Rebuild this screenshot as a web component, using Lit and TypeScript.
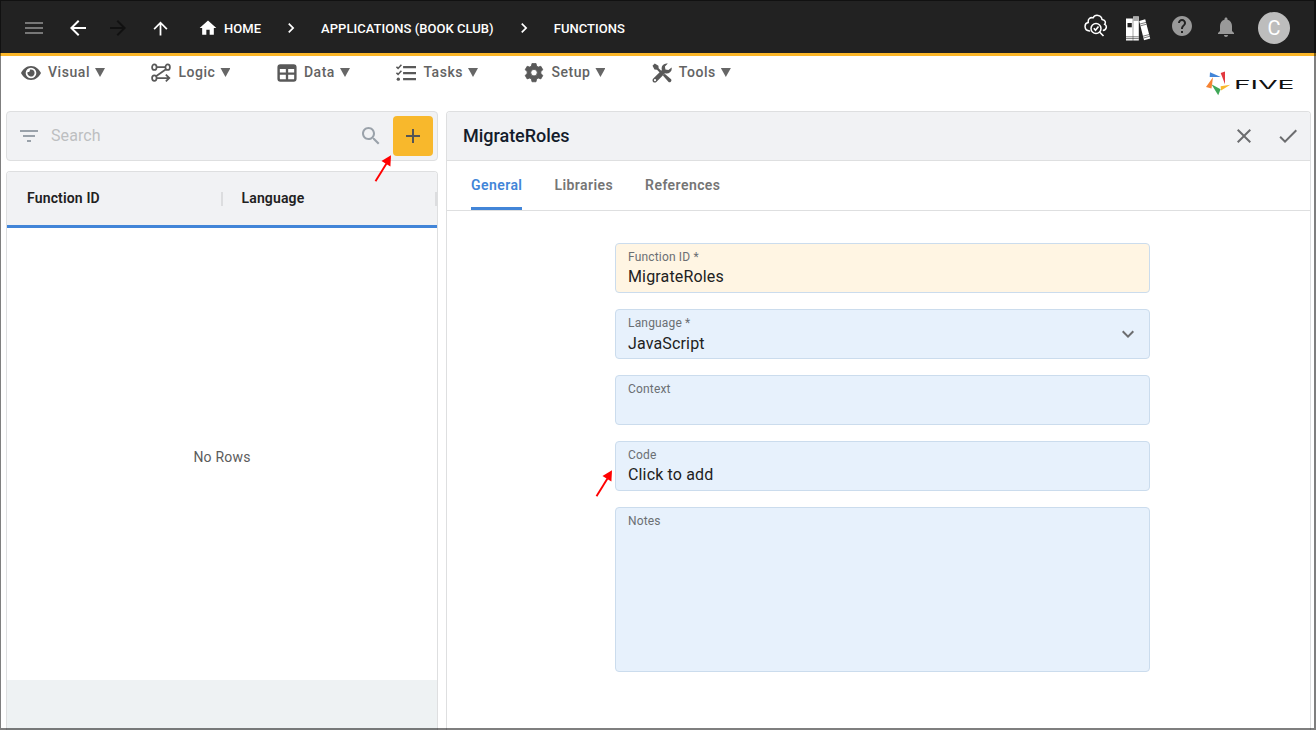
import { LitElement, html, svg, css } from "lit";
import { customElement } from "lit/decorators.js";

const icon = (size: number, body: unknown, cls = "") =>
  html`<svg class="ic ${cls}" width=${size} height=${size} viewBox="0 0 24 24" fill="currentColor">${body}</svg>`;

const P = (d: string) => svg`<path d=${d}></path>`;

const I = {
  menu: P("M3 18h18v-2H3v2zm0-5h18v-2H3v2zm0-7v2h18V6H3z"),
  back: P("M20 11H7.83l5.59-5.59L12 4l-8 8 8 8 1.41-1.41L7.83 13H20v-2z"),
  forward: P("M12 4l-1.41 1.41L16.17 11H4v2h12.17l-5.58 5.59L12 20l8-8z"),
  up: P("M4 12l1.41 1.41L11 7.83V20h2V7.83l5.58 5.59L20 12l-8-8-8 8z"),
  home: P("M10 20v-6h4v6h5v-8h3L12 3 2 12h3v8z"),
  chevron: P("M10 6 8.59 7.41 13.17 12l-4.58 4.59L10 18l6-6z"),
  help: P("M12 2C6.48 2 2 6.48 2 12s4.48 10 10 10 10-4.48 10-10S17.52 2 12 2zm1 17h-2v-2h2v2zm2.07-7.75-.9.92C13.45 12.9 13 13.5 13 15h-2v-.5c0-1.1.45-2.1 1.17-2.83l1.24-1.26c.37-.36.59-.86.59-1.41 0-1.1-.9-2-2-2s-2 .9-2 2H8c0-2.21 1.79-4 4-4s4 1.79 4 4c0 .88-.36 1.68-.93 2.25z"),
  bell: P("M12 22c1.1 0 2-.9 2-2h-4c0 1.1.89 2 2 2zm6-6v-5c0-3.07-1.64-5.64-4.5-6.32V4c0-.83-.67-1.5-1.5-1.5s-1.5.67-1.5 1.5v.68C7.63 5.36 6 7.92 6 11v5l-2 2v1h16v-1l-2-2z"),
  filter: P("M10 18h4v-2h-4v2zM3 6v2h18V6H3zm3 7h12v-2H6v2z"),
  search: P("M15.5 14h-.79l-.28-.27C15.41 12.59 16 11.11 16 9.5 16 5.91 13.09 3 9.5 3S3 5.91 3 9.5 5.91 16 9.5 16c1.61 0 3.09-.59 4.23-1.57l.27.28v.79l5 4.99L20.49 19l-4.99-5zm-6 0C7.01 14 5 11.99 5 9.5S7.01 5 9.5 5 14 7.01 14 9.5 11.99 14 9.5 14z"),
  add: P("M19 13h-6v6h-2v-6H5v-2h6V5h2v6h6v2z"),
  close: P("M19 6.41 17.59 5 12 10.59 6.41 5 5 6.41 10.59 12 5 17.59 6.41 19 12 13.41 17.59 19 19 17.59 13.41 12z"),
  check: P("M9 16.17 4.83 12l-1.42 1.41L9 19 21 7l-1.41-1.41z"),
  expand: P("M16.59 8.59 12 13.17 7.41 8.59 6 10l6 6 6-6z"),
  eye: svg`<path fill-rule="evenodd" d="M12 3.6C6.3 3.6 2 7.8 0 12c2 4.200 6.300 8.400 12 8.400s10-4.200 12-8.400C22 7.800 17.700 3.600 12 3.600zM12 18.400a6.400 6.400 0 1 1 0-12.800 6.400 6.400 0 0 1 0 12.800z"></path><path d="M12 7.700a4.300 4.300 0 1 1-4.100 3c1.600.6 3.200-.8 2.700-2.700.4-.2.900-.3 1.400-.3z"></path>`,
  logic: svg`<g fill="none" stroke="currentColor" stroke-width="2.100"><ellipse cx="4" cy="5" rx="2.700" ry="3.300"></ellipse><ellipse cx="20" cy="5" rx="2.700" ry="3.300"></ellipse><ellipse cx="4" cy="18" rx="2.700" ry="3.300"></ellipse><path d="M7 5h10M18 7.500 6 15.800M7 18h14M17.800 14l4.200 4-4.200 4"></path></g>`,
  data: svg`<path fill-rule="evenodd" d="M4 1.500h16a3.500 3.500 0 0 1 3.500 3.500v14a3.500 3.500 0 0 1-3.500 3.500H4A3.500 3.500 0 0 1 .5 19V5A3.500 3.500 0 0 1 4 1.500zM3.400 7.300v4h7.200v-4zM13.400 7.300v4h7.200v-4zM3.400 14v4.500a1 1 0 0 0 1 1h6.200V14zM13.400 14v5.500h6.200a1 1 0 0 0 1-1V14z"></path>`,
  tasks: svg`<path d="M8.500 3.500H24v2.800H8.500zM8.500 10.700H24v2.800H8.500zM8.500 18H24v2.800H8.500z"></path><circle cx="2.800" cy="19.400" r="2"></circle><path fill="none" stroke="currentColor" stroke-width="1.900" d="M.5 4.600 2.500 6.500 6.500 2.200M.5 11.800l2 1.900 4-4.300"></path>`,
  gear: svg`<path fill-rule="evenodd" d="M9.600.5h4.800l.7 3.200 2 1.200 3.100-1 2.400 4.200-2.400 2.200v2.400l2.400 2.200-2.400 4.200-3.100-1-2 1.200-.7 3.200H9.600l-.7-3.200-2-1.200-3.100 1-2.400-4.200 2.400-2.200v-2.400L1.400 8.100l2.400-4.200 3.100 1 2-1.200zM12 7.700a3.900 3.900 0 1 0 0 7.800 3.900 3.900 0 0 0 0-7.800z" stroke="currentColor" stroke-width="1" stroke-linejoin="round"></path>`,
  tools: svg`<path d="M.6 3.300 3.300.6l4.400 2.600.3 3 4.300 4.300-2 2L6 8.200l-3-.4z"></path><path d="M13.300 15.300c-.3-1.100 1-2.400 2.300-2.200l7.300 6.500c1.500 1.600-1.400 4.700-3 3.200z"></path><path fill-rule="evenodd" d="M23.500 5.300a6 6 0 0 1-7.900 7L5.200 22.800c-2.600 2.300-6.100-1.200-3.900-3.900L11.900 8.500A6 6 0 0 1 19 .7l-3.500 3.500.6 3.500 3.600.7zM3.600 19.300a1.300 1.300 0 1 0 0 2.600 1.300 1.300 0 0 0 0-2.600z"></path>`,
};

const cloud = html`<svg class="cloud" width="24" height="24" viewBox="0 0 24 24" fill="none" stroke="#fff" stroke-width="1.500">
  <path d="M6.200 16.900H5.600C-.2 16.500-.2 9.200 4.300 8.600 3.600 5 6.400 2.900 9 3.900c2-3.900 8.300-3.200 9 1.500 3.300.2 4 3.200 2.700 4.900 2.600 1.300 2.100 5.700-1.900 6.300"></path>
  <circle cx="12" cy="14.500" r="5"></circle><path d="m9.800 14.300 1.700 1.900 3-3.700M15.500 18l4 4" stroke-width="1.700"></path></svg>`;

const books = html`<svg class="books" width="25" height="25" viewBox="0 0 25 25">
  <path fill="#fff" d="M0 2.500h6.800V24.500H0zM7.200.500h5.600v24H7.200zM13.200 5l6-1.700 5 19.200-6.200 1.800z"></path>
  <path fill="#aaa" d="M7.200.500h5.600V5H7.200z"></path>
  <path stroke="#222" stroke-width=".6" fill="none" d="M0 20.800h12.800M0 22.600h12.800M14 8l6-1.600M14.500 9.800l6-1.600M17 20.200l6.300-1.700M17.500 22l6.300-1.700"></path>
  <path fill="#222" d="M1.500 7h4.300v4.300H1.500z"></path></svg>`;

const logo = html`<svg class="logo" width="90" height="26" viewBox="0 0 90 26">
  <path fill="#4285d8" d="M4 2.300l10.800 4.600H3.700z"></path><path fill="#e2383f" d="M19 1.500v12.700L14.700 3z"></path>
  <path fill="#f9b92c" d="M24.300 14.800l-9.300 5.700-.4-4.300z"></path><path fill="#3fa757" d="M5.400 14.300l9.200 5-2.400 5.900z"></path><path fill="#f58233" d="M7 7.200L5.500 18.400 0 17z"></path>
  <text x="28" y="18.500" font-family="Inter, sans-serif" font-weight="400" font-size="12.200" textLength="60.500" lengthAdjust="spacingAndGlyphs" fill="#111">FIVE</text></svg>`;

const arrow = (cls: string) => html`<svg class="arrow ${cls}" width="18" height="28" viewBox="0 0 18 28">
  <path d="M1.500 26.300 12.500 8.500" stroke="#f00" stroke-width="1.900"></path><path d="M17 .3 7.500 6l8.900 5.500z" fill="#f00"></path></svg>`;

@customElement("app-root")
export class AppRoot extends LitElement {
  static styles = css`
    :host { display: flex; flex-direction: column; position: relative; width: 1316px; height: 730px; overflow: hidden; background: #fff; font-family: Roboto, sans-serif; color: #212121; }
    * { box-sizing: border-box; }
    svg { display: block; flex: none; }
    .frame { position: absolute; inset: 0; border: solid rgba(0,0,0,.5); border-width: 1px 2px 2px 1px; pointer-events: none; }
    .top { height: 56px; flex: none; background: #222; border-bottom: 3px solid #fbb628; display: flex; align-items: center; color: #fff; padding: 3px 26px 0 22px; font-size: 13px; font-weight: 500; line-height: 16px; }
    .top > span { padding-top: 2px; letter-spacing: .04px; }
    .burger { color: #777; margin-right: 20px; }
    .back { margin-right: 16px; }
    .fwd { color: #111; margin-right: 20px; }
    .up { margin-right: 27px; }
    .home { margin-right: 6px; }
    .sep { margin: 0 20px; }
    .spacer { flex: 1; }
    .right { display: flex; align-items: center; }
    .cloud { margin: -5px 18px 0 0; }
    .books { margin-right: 19px; }
    .help { color: #999; margin: -4px 20px 0 0; }
    .bell { color: #999; margin: -3px 20px 0 0; }
    .avatar { width: 32px; height: 32px; border-radius: 50%; background: #bdbdbd; display: flex; align-items: center; justify-content: center; font-size: 20px; font-weight: 400; }
    .menu { height: 55px; flex: none; display: flex; padding: 6px 20px 0 21px; gap: 46.4px; }
    .item { display: flex; align-items: center; height: 22px; color: #595959; font-size: 14px; font-weight: 500; letter-spacing: .55px; }
    .item span { margin-top: -2px; color: #636363; }
    .item .ic { margin: 0 7px 0 0; }
    .item .tri { width: 10px; height: 9px; margin: -1px 0 0 5px; clip-path: polygon(0 0, 100% 0, 50% 100%); background: #666; }
    .logo { margin: 8px 0 0 auto; }
    .main { flex: 1; display: flex; gap: 8px; padding: 0 5px 0 6px; min-height: 0; }
    .left { width: 432px; display: flex; flex-direction: column; gap: 10px; }
    .search { height: 50px; flex: none; background: #f1f2f4; border: 1px solid #dedfe0; border-radius: 4px; display: flex; align-items: center; padding: 0 4px 0 10px; }
    .search .ic { color: #9aa2aa; }
    .search .ph { flex: 1; margin: -2px 0 0 10px; font-size: 16px; letter-spacing: .1px; color: #bdbfc1; }
    .search .mag { margin-right: 10px; }
    .add { width: 40px; height: 40px; border-radius: 4px; background: #f8b82c; display: flex; align-items: center; justify-content: center; }
    .search .add .ic { color: #555; }
    .table { flex: 1; border: 1px solid #dedfe0; border-bottom: 0; border-radius: 4px 4px 0 0; display: flex; flex-direction: column; overflow: hidden; }
    .thead { height: 56px; flex: none; background: #f1f2f4; border-bottom: 3px solid #4285d8; display: flex; align-items: center; font-size: 14px; font-weight: 600; }
    .th { width: 216px; height: 14px; line-height: 12px; padding-left: 20px; border-right: 2px solid #dcdddf; letter-spacing: .15px; }
    .th + .th { width: 215px; padding-left: 19px; }
    .rows { flex: 1; display: flex; align-items: center; justify-content: center; font-size: 14px; color: #5c5c5c; letter-spacing: .2px; padding-top: 5px; }
    .tfoot { height: 50px; background: #eef2f3; }
    .panel { flex: 1; border: 1px solid #dedfe0; border-bottom: 0; border-radius: 4px 4px 0 0; overflow: hidden; }
    .phead { height: 49px; background: #f1f2f4; border-bottom: 1px solid #dedfe0; display: flex; align-items: center; padding: 0 10px 0 16px; color: #6c6d6f; }
    .title { flex: 1; margin-top: -2px; font-size: 18px; font-weight: 500; letter-spacing: -.03px; color: #141c2b; }
    .phead .x { margin-right: 20px; }
    .tabs { height: 50px; border-bottom: 1px solid #dedfe0; display: flex; gap: 32px; padding-left: 24px; font-size: 14px; font-weight: 600; letter-spacing: .43px; color: #757575; }
    .tab { height: 49px; line-height: 49px; border-bottom: 3px solid transparent; }
    .tab.on { color: #4285d8; border-color: #4285d8; border-radius: 2px 2px 0 0; }
    .form { display: flex; flex-direction: column; gap: 16px; width: 535px; margin: 32px 0 0 168px; }
    .field { height: 50px; border: 1px solid #cbdced; border-radius: 4px; background: #e7f1fc; display: flex; align-items: center; padding: 0 9px 0 12px; color: #6c6d6f; }
    .field.hot { background: #fff5e3; }
    .field.tall { height: 165px; }
    .fcol { flex: 1; align-self: stretch; padding-top: 6px; }
    .lab { font-size: 12px; line-height: 14px; letter-spacing: .17px; color: #6b6f73; }
    .val { font-size: 16px; line-height: 20px; margin-top: 3px; color: #212121; letter-spacing: .15px; }
    .sel .val { margin-top: 4px; }
    .arrow { position: absolute; }
    .a1 { left: 374px; top: 155px; }
    .a2 { left: 595px; top: 470px; }
  `;

  private menu = [
    ["Visual", I.eye], ["Logic", I.logic], ["Data", I.data],
    ["Tasks", I.tasks], ["Setup", I.gear], ["Tools", I.tools],
  ] as const;

  private fields = [
    { label: "Function ID *", value: "MigrateRoles", cls: "hot" },
    { label: "Language *", value: "JavaScript", cls: "sel", select: true },
    { label: "Context", value: "", cls: "" },
    { label: "Code", value: "Click to add", cls: "" },
    { label: "Notes", value: "", cls: "tall" },
  ];

  render() {
    return html`
      <header class="top">
        ${icon(24, I.menu, "burger")}${icon(24, I.back, "back")}${icon(24, I.forward, "fwd")}${icon(21, I.up, "up")}${icon(20, I.home, "home")}
        <span>HOME</span>${icon(20, I.chevron, "sep")}<span>APPLICATIONS (BOOK CLUB)</span>${icon(20, I.chevron, "sep")}<span>FUNCTIONS</span>
        <div class="spacer"></div>
        <div class="right">${cloud}${books}${icon(24, I.help, "help")}${icon(24, I.bell, "bell")}<div class="avatar">C</div></div>
      </header>
      <nav class="menu">
        ${this.menu.map(([t, i]) => html`<div class="item">${icon(20, i)}<span>${t}</span><i class="tri"></i></div>`)}
        ${logo}
      </nav>
      <main class="main">
        <section class="left">
          <div class="search">${icon(24, I.filter)}<span class="ph">Search</span>${icon(24, I.search, "mag")}<div class="add">${icon(24, I.add)}</div></div>
          <div class="table">
            <div class="thead"><div class="th">Function ID</div><div class="th">Language</div></div>
            <div class="rows">No Rows</div>
            <div class="tfoot"></div>
          </div>
        </section>
        <section class="panel">
          <div class="phead"><div class="title">MigrateRoles</div>${icon(24, I.close, "x")}${icon(24, I.check)}</div>
          <div class="tabs"><div class="tab on">General</div><div class="tab">Libraries</div><div class="tab">References</div></div>
          <div class="form">
            ${this.fields.map((f) => html`<div class="field ${f.cls}"><div class="fcol"><div class="lab">${f.label}</div><div class="val">${f.value}</div></div>${f.select ? icon(24, I.expand) : ""}</div>`)}
          </div>
        </section>
      </main>
      ${arrow("a1")}${arrow("a2")}
      <div class="frame"></div>
    `;
  }
}
